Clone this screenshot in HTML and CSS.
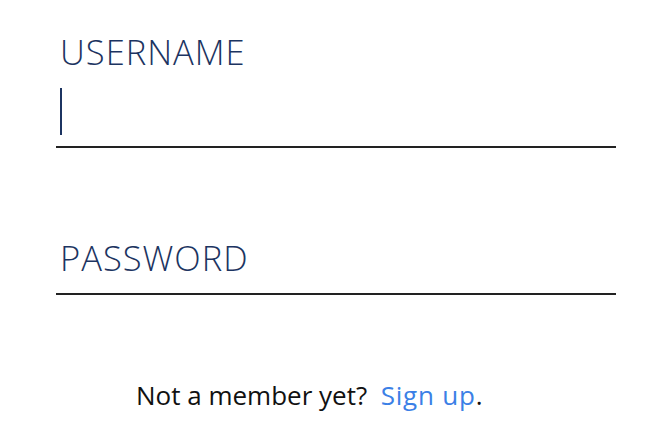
FILE: index.html
```html
<!DOCTYPE html>
<html>
<head>
<meta charset="utf-8">
<link rel="stylesheet" href="styles.css">
</head>
<body>
<form class="login">
  <div class="field">
    <label class="label">USERNAME</label>
    <div class="input"><span class="caret"></span></div>
  </div>
  <div class="field field-pass">
    <label class="label">PASSWORD</label>
    <div class="input input-pass"></div>
  </div>
  <p class="signup">Not a member yet?&nbsp; <a class="link" href="#">Sign up</a>.</p>
</form>
</body>
</html>
```
FILE: styles.css
```css
html, body {
  margin: 0;
  padding: 0;
  background: #ffffff;
}
body {
  width: 664px;
  height: 424px;
  overflow: hidden;
  font-family: "Open Sans", "Liberation Sans", sans-serif;
}
.login {
  display: flex;
  flex-direction: column;
  padding: 30px 48px 0 56px;
}
.field {
  display: flex;
  flex-direction: column;
}
.label {
  font-size: 34.5px;
  font-weight: 300;
  color: #1c3461;
  line-height: 44px;
  padding-left: 4px;
  letter-spacing: 1px;
}
.input {
  height: 72px;
  border-bottom: 2px solid #222222;
  display: flex;
  align-items: flex-start;
  padding-left: 4px;
}
.caret {
  width: 2px;
  height: 47px;
  margin-top: 14px;
  background: #1c3461;
}
.field-pass {
  margin-top: 88px;
}
.input-pass {
  height: 13px;
}
.signup {
  margin: 82px 0 0 80px;
  font-size: 26px;
  color: #111111;
}
.link {
  color: #3b80e6;
  text-decoration: none;
  letter-spacing: 0.8px;
}
```
